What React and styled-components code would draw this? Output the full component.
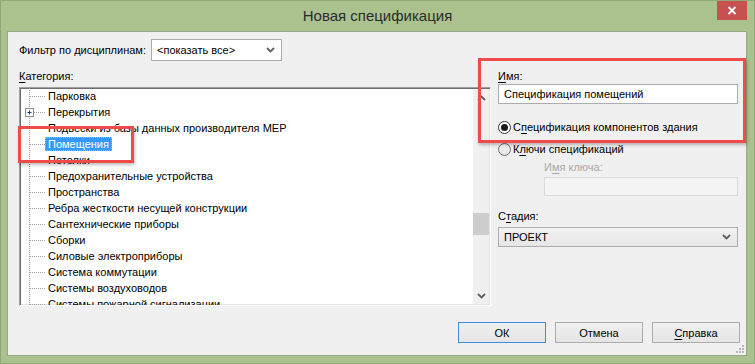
import React from 'react';
import styled, { createGlobalStyle } from 'styled-components';

const GlobalStyle = createGlobalStyle`
  html, body {
    margin: 0;
    padding: 0;
  }
  body {
    width: 755px;
    height: 364px;
    overflow: hidden;
    font-family: "Liberation Sans", Arial, sans-serif;
    font-size: 11px;
    color: #000;
  }
  u {
    text-decoration: underline;
    text-underline-offset: 2px;
  }
`;

const Window = styled.div`
  position: relative;
  box-sizing: border-box;
  width: 755px;
  height: 364px;
  background: #abc28f;
  border: 1px solid #8fa877;
  display: flex;
  flex-direction: column;
`;

const TitleBar = styled.div`
  height: 30px;
  display: grid;
  grid-template-columns: 1fr auto 1fr;
`;

const Title = styled.div`
  align-self: center;
  font-size: 15px;
  color: #2b2b2b;
  padding-bottom: 1px;
`;

const CloseButton = styled.div`
  justify-self: end;
  width: 30px;
  height: 19px;
  margin-right: 7px;
  background: #c75050;
  display: flex;
  align-items: center;
  justify-content: center;
`;

const Client = styled.div`
  flex: 1;
  margin: 0 7px 7px 6px;
  background: #f0f0f0;
  border: 1px solid #97a987;
  display: flex;
  flex-direction: column;
  position: relative;
`;

const FilterRow = styled.div`
  display: flex;
  align-items: center;
  margin: 7px 0 0 11px;
  height: 22px;
`;

const FieldLabel = styled.div`
  height: 16px;
  line-height: 16px;
  white-space: nowrap;
  color: ${({ disabled }) => (disabled ? '#a9a9a9' : '#000')};
  width: ${({ width }) => (width ? `${width}px` : 'auto')};
  margin-left: ${({ indent }) => indent || 0}px;
`;

const Select = styled.div`
  box-sizing: border-box;
  width: ${({ width }) => width}px;
  height: ${({ height }) => height}px;
  border: 1px solid #acacac;
  background: ${({ flat }) => (flat ? '#fff' : 'linear-gradient(#f2f2f2, #e6e6e6)')};
  display: flex;
  align-items: center;
  justify-content: space-between;
  padding: 0 6px 0 5px;
  white-space: nowrap;
`;

const Main = styled.div`
  display: flex;
  margin-top: 7px;
`;

const LeftColumn = styled.div`
  display: flex;
  flex-direction: column;
  margin-left: 11px;
  width: 472px;
  gap: 3px;
`;

const RightColumn = styled.div`
  display: flex;
  flex-direction: column;
  margin-left: 7px;
  width: 240px;
`;

const ListBox = styled.div`
  box-sizing: border-box;
  height: 219px;
  border: 1px solid;
  border-color: #a0a0a0 #fff #fff #a0a0a0;
  box-shadow: inset 1px 1px #6f6f6f, inset -1px -1px #e3e3e3;
  background: #fff;
  display: flex;
  overflow: hidden;
`;

const TreeItems = styled.div`
  flex: 1;
  overflow: hidden;
  display: flex;
  flex-direction: column;
`;

const TreeRow = styled.div`
  height: 16px;
  flex: none;
  display: flex;
  align-items: center;
`;

const TreeText = styled.span`
  box-sizing: border-box;
  height: 14px;
  line-height: 12px;
  padding: 0 2px;
  white-space: nowrap;
  color: ${({ selected }) => (selected ? '#fff' : '#000')};
  background: ${({ selected }) => (selected ? '#3399ff' : 'transparent')};
  border: 1px dotted ${({ selected }) => (selected ? '#f0b060' : 'transparent')};
`;

const ScrollBar = styled.div`
  width: 16px;
  background: #f0f0f0;
  display: flex;
  flex-direction: column;
  margin: 1px 1px 1px 0;
`;

const ScrollArrow = styled.div`
  height: 17px;
  display: flex;
  align-items: center;
  justify-content: center;
`;

const ScrollTrack = styled.div`
  flex: 1;
`;

const ScrollThumb = styled.div`
  height: 22px;
  background: #cdcdcd;
`;

const TextInput = styled.div`
  box-sizing: border-box;
  height: ${({ height }) => height || 20}px;
  border: 1px solid ${({ disabled }) => (disabled ? '#d9d9d9' : '#abadb3')};
  background: ${({ disabled }) => (disabled ? '#f4f4f4' : '#fff')};
  padding: 0 5px;
  display: flex;
  align-items: center;
  margin-left: ${({ indent }) => indent || 0}px;
  margin-top: ${({ top }) => top || 0}px;
`;

const RadioRow = styled.div`
  height: 16px;
  display: flex;
  align-items: center;
  gap: 2px;
  margin-top: ${({ top }) => top}px;
`;

const RadioCircle = styled.span`
  box-sizing: border-box;
  width: 13px;
  height: 13px;
  border-radius: 50%;
  border: 1px solid ${({ checked }) => (checked ? '#333' : '#707070')};
  background: ${({ checked }) => (checked ? '#fff' : 'linear-gradient(#f4f4f4, #e2e2e2)')};
  display: flex;
  align-items: center;
  justify-content: center;
  &::after {
    content: '';
    width: 7px;
    height: 7px;
    border-radius: 50%;
    background: ${({ checked }) => (checked ? '#1a1a1a' : 'transparent')};
  }
`;

const Spaced = styled.div`
  margin-top: ${({ top }) => top}px;
`;

const Footer = styled.div`
  display: flex;
  justify-content: flex-end;
  gap: 9px;
  margin-top: 16px;
  padding-right: 6px;
`;

const Button = styled.div`
  box-sizing: border-box;
  width: 88px;
  height: 21px;
  border: 1px solid ${({ primary }) => (primary ? '#3c8fe0' : '#acacac')};
  background: linear-gradient(#f0f0f0, #e5e5e5);
  display: flex;
  align-items: center;
  justify-content: center;
`;

const Grip = styled.svg`
  position: absolute;
  right: 1px;
  bottom: 1px;
`;

const Callout = styled.div`
  position: absolute;
  box-sizing: border-box;
  left: ${({ x }) => x}px;
  top: ${({ y }) => y}px;
  width: ${({ w }) => w}px;
  height: ${({ h }) => h}px;
  border: 3px solid #f04a4a;
  box-shadow: 1px 2px 3px rgba(0, 0, 0, 0.25);
  pointer-events: none;
`;

const Chevron = ({ up }) => (
  <svg width="9" height="6" viewBox="0 0 9 6">
    <path
      d={up ? 'M1 5 L4.5 1.5 L8 5' : 'M1 1 L4.5 4.5 L8 1'}
      fill="none"
      stroke="#606060"
      strokeWidth="1.8"
    />
  </svg>
);

const Connector = ({ expandable }) => (
  <svg width="25" height="16" viewBox="0 0 25 16">
    <line x1="9.5" y1="0" x2="9.5" y2="16" stroke="#a0a0a0" strokeDasharray="1 1" />
    <line x1="10" y1="8.5" x2="25" y2="8.5" stroke="#a0a0a0" strokeDasharray="1 1" />
    {expandable && (
      <g>
        <rect x="5.5" y="4.5" width="8" height="8" fill="#fff" stroke="#8f8f8f" />
        <path d="M7.5 8.5 H11.5 M9.5 6.5 V10.5" stroke="#1c3f7a" />
      </g>
    )}
  </svg>
);

const categories = [
  { name: 'Парковка' },
  { name: 'Перекрытия', expandable: true },
  { name: 'Подвески из базы данных производителя MEP' },
  { name: 'Помещения', selected: true },
  { name: 'Потолки' },
  { name: 'Предохранительные устройства' },
  { name: 'Пространства' },
  { name: 'Ребра жесткости несущей конструкции' },
  { name: 'Сантехнические приборы' },
  { name: 'Сборки' },
  { name: 'Силовые электроприборы' },
  { name: 'Система коммутации' },
  { name: 'Системы воздуховодов' },
  { name: 'Системы пожарной сигнализации' },
];

function App() {
  return (
    <>
      <GlobalStyle />
      <Window>
        <TitleBar>
          <span />
          <Title>Новая спецификация</Title>
          <CloseButton>
            <svg width="10" height="9" viewBox="0 0 10 9">
              <path d="M1.5 1 L8.5 8 M8.5 1 L1.5 8" stroke="#fff" strokeWidth="1.8" />
            </svg>
          </CloseButton>
        </TitleBar>

        <Client>
          <FilterRow>
            <FieldLabel width={132}>Фильтр по дисциплинам:</FieldLabel>
            <Select width={131} height={22} flat>
              <span>&lt;показать все&gt;</span>
              <Chevron />
            </Select>
          </FilterRow>

          <Main>
            <LeftColumn>
              <FieldLabel>
                <u>К</u>атегория:
              </FieldLabel>
              <ListBox>
                <TreeItems>
                  {categories.map((c) => (
                    <TreeRow key={c.name}>
                      <Connector expandable={c.expandable} />
                      <TreeText selected={c.selected}>{c.name}</TreeText>
                    </TreeRow>
                  ))}
                </TreeItems>
                <ScrollBar>
                  <ScrollArrow>
                    <Chevron up />
                  </ScrollArrow>
                  <ScrollTrack>
                    <ScrollThumb style={{ marginTop: 107 }} />
                  </ScrollTrack>
                  <ScrollArrow>
                    <Chevron />
                  </ScrollArrow>
                </ScrollBar>
              </ListBox>
            </LeftColumn>

            <RightColumn>
              <FieldLabel>
                <u>И</u>мя:
              </FieldLabel>
              <TextInput>Спецификация помещений</TextInput>
              <RadioRow top={15}>
                <RadioCircle checked />
                <span>
                  С<u>п</u>ецификация компонентов здания
                </span>
              </RadioRow>
              <RadioRow top={6}>
                <RadioCircle />
                <span>
                  К<u>л</u>ючи спецификаций
                </span>
              </RadioRow>
              <Spaced top={2}>
                <FieldLabel disabled indent={46}>
                  И<u>м</u>я ключа:
                </FieldLabel>
              </Spaced>
              <TextInput disabled indent={46} top={2} height={19} />
              <Spaced top={12}>
                <FieldLabel>
                  С<u>т</u>адия:
                </FieldLabel>
              </Spaced>
              <Spaced top={3}>
                <Select width={240} height={20}>
                  <span>ПРОЕКТ</span>
                  <Chevron />
                </Select>
              </Spaced>
            </RightColumn>
          </Main>

          <Footer>
            <Button primary>ОК</Button>
            <Button>Отмена</Button>
            <Button>
              <span>
                <u>С</u>правка
              </span>
            </Button>
          </Footer>

          <Grip width="10" height="10" viewBox="0 0 10 10">
            {[
              [7, 1],
              [7, 4],
              [4, 4],
              [7, 7],
              [4, 7],
              [1, 7],
            ].map(([x, y]) => (
              <rect key={`${x}-${y}`} x={x} y={y} width="2" height="2" fill="#b8b8b8" />
            ))}
          </Grip>
        </Client>

        <Callout x={17} y={125} w={116} h={37} />
        <Callout x={477} y={57} w={268} h={85} />
      </Window>
    </>
  );
}

export default App;
